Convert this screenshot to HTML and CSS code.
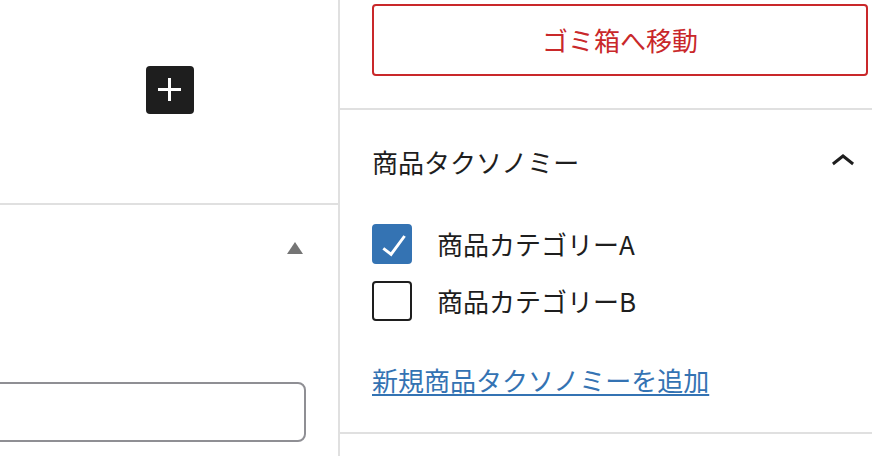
FILE: index.html
```html
<!DOCTYPE html>
<html lang="ja">
    <head>
        <meta charset="UTF-8" />
        <meta name="viewport" content="width=device-width, initial-scale=1.0" />
        <title>商品の編集</title>
        <link rel="stylesheet" href="styles.css">
    </head>
    <body>
        <div class="editor">
            <div class="canvas-panel">
                <section class="inserter">
                    <button class="add-block" aria-label="ブロックを追加">
                        <svg viewBox="0 0 24 24">
                            <path d="M11 12.5V17.5H12.5V12.5H17.5V11H12.5V6H11V11H6V12.5H11Z" />
                        </svg>
                    </button>
                </section>
                <section class="settings">
                    <div class="settings-head">
                        <span class="caret"></span>
                    </div>
                    <div class="field">
                        <input type="text" class="text-input" />
                    </div>
                </section>
            </div>

            <aside class="sidebar">
                <section class="panel trash">
                    <button class="trash-btn">ゴミ箱へ移動</button>
                </section>
                <section class="panel taxonomy">
                    <div class="panel-head">
                        <h2>商品タクソノミー</h2>
                        <button class="toggle" aria-label="閉じる">
                            <svg viewBox="0 0 24 24">
                                <path d="M6.5 12.4L12 8l5.5 4.4-.9 1.2L12 10l-4.6 3.6-.9-1.2z" />
                            </svg>
                        </button>
                    </div>
                    <ul class="terms">
                        <li>
                            <span class="box checked">
                                <svg viewBox="0 0 24 24">
                                    <path d="M16.7 7.1l-6.3 8.5-3.3-2.5-.9 1.2 4.5 3.4L17.9 7.9z" />
                                </svg>
                            </span>
                            <span class="term-name">商品カテゴリーA</span>
                        </li>
                        <li>
                            <span class="box"></span>
                            <span class="term-name">商品カテゴリーB</span>
                        </li>
                    </ul>
                    <p class="add-row">
                        <a href="#" class="add-term">新規商品タクソノミーを追加</a>
                    </p>
                </section>
            </aside>
        </div>
    </body>
</html>
```

FILE: styles.css
```css
* {
    margin: 0;
    padding: 0;
    box-sizing: border-box;
}
body {
    background: #fff;
    color: #1e1e1e;
    font-family: 'Noto Sans CJK JP', sans-serif;
    overflow: hidden;
}
.editor {
    width: 900px;
    height: 100vh;
    display: flex;
}

/* left column */
.canvas-panel {
    flex: none;
    width: 340px;
    border-right: 2px solid #e0e0e0;
}
.inserter {
    height: 205px;
    padding: 66px 0 0 2px;
    display: flex;
    justify-content: center;
    align-items: flex-start;
    border-bottom: 2px solid #e0e0e0;
}
.add-block {
    width: 48px;
    height: 48px;
    background: #1e1e1e;
    border: none;
    border-radius: 4px;
    display: flex;
}
.add-block svg {
    width: 48px;
    height: 48px;
    fill: #fff;
}
.settings {
    padding-right: 35px;
}
.settings-head {
    padding-top: 37px;
    display: flex;
    justify-content: flex-end;
}
.caret {
    width: 0;
    height: 0;
    border-left: 8px solid transparent;
    border-right: 8px solid transparent;
    border-bottom: 12px solid #757575;
}
.field {
    margin-top: 128px;
}
.text-input {
    display: block;
    margin-left: -20px;
    width: 326px;
    height: 60px;
    border: 2px solid #8f8f94;
    border-radius: 8px;
    background: #fff;
    outline: none;
}

/* right column */
.sidebar {
    flex: none;
    width: 560px;
}
.panel {
    border-bottom: 2px solid #e0e0e0;
}
.trash {
    padding: 4px 32px 32px;
}
.trash-btn {
    display: block;
    width: 100%;
    height: 72px;
    background: #fff;
    border: 2px solid #c9282a;
    border-radius: 4px;
    color: #c9282a;
    font-family: inherit;
    font-size: 26px;
    line-height: 1;
}
.taxonomy {
    padding: 28px 32px 32px;
}
.panel-head {
    height: 48px;
    display: flex;
    align-items: center;
    justify-content: space-between;
}
.panel-head h2 {
    font-size: 26px;
    font-weight: 400;
    line-height: 48px;
}
.toggle {
    width: 48px;
    height: 48px;
    margin-right: 1px;
    background: none;
    border: none;
    display: flex;
}
.toggle svg {
    width: 48px;
    height: 48px;
    fill: #1e1e1e;
}
.terms {
    list-style: none;
    margin-top: 38px;
    display: flex;
    flex-direction: column;
    gap: 17px;
}
.terms li {
    height: 40px;
    display: flex;
    align-items: center;
    gap: 25px;
    font-size: 26px;
    line-height: 40px;
}
.box {
    position: relative;
    flex: none;
    width: 40px;
    height: 40px;
    border: 2px solid #1e1e1e;
    border-radius: 4px;
}
.box.checked {
    background: #3473b3;
    border-color: #3473b3;
}
.box svg {
    position: absolute;
    left: -4px;
    top: -5px;
    width: 48px;
    height: 48px;
    fill: #fff;
}
.add-row {
    margin-top: 39px;
    font-size: 26px;
    line-height: 40px;
}
.add-term {
    color: #3473b3;
    text-decoration: underline;
    text-decoration-thickness: 2px;
    text-underline-offset: 3px;
}
```
